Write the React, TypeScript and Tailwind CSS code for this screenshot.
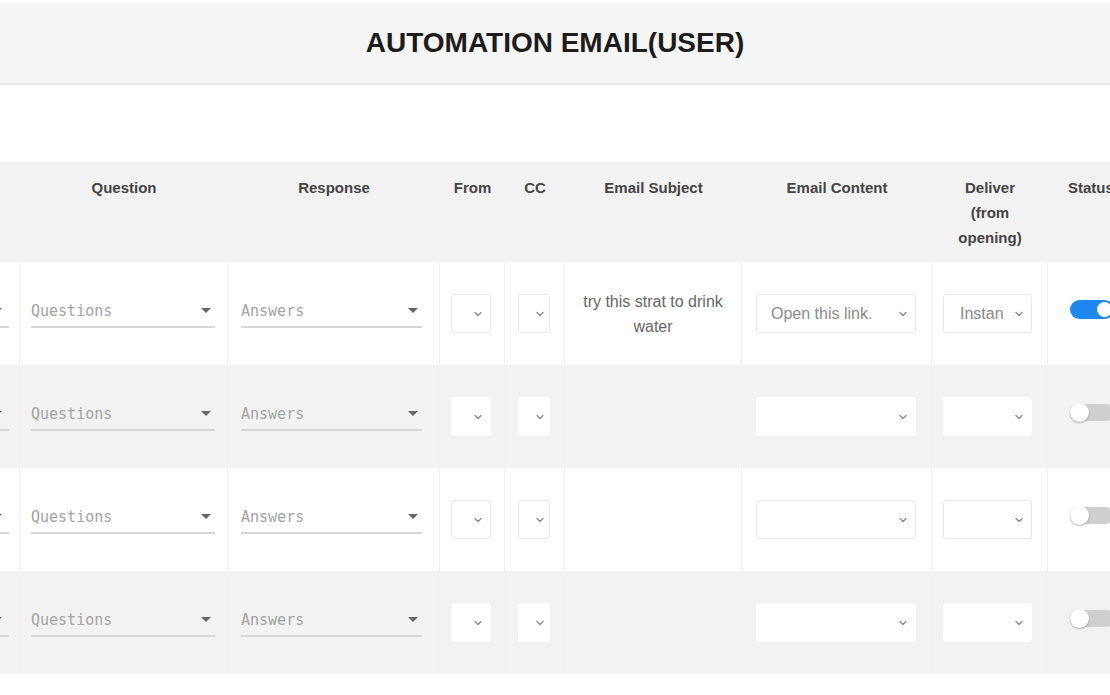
import { ChevronDown } from 'lucide-react';

type Row = {
  subject?: string;
  content?: string;
  deliver?: string;
  active: boolean;
};

const rows: Row[] = [
  { subject: 'try this strat to drink water', content: 'Open this link...', deliver: 'Instantly', active: true },
  { active: false },
  { active: false },
  { active: false },
];

const cols = 'grid grid-cols-[20px_208px_212px_65px_60px_177px_190px_116px_80px]';

function Caret() {
  return (
    <svg width="10" height="5" viewBox="0 0 10 5" className="shrink-0">
      <path d="M0 0 L10 0 L5 5 Z" fill="#666" />
    </svg>
  );
}

// underlined select used for Question / Response
function LineSelect({ placeholder, width, caretGap = 4 }: { placeholder: string; width: number; caretGap?: number }) {
  return (
    <div
      className="flex items-center justify-between h-[28px] pb-[4px] border-b-2 border-[#d6d6d6] shrink-0"
      style={{ width }}
    >
      <span className="font-['DejaVu_Sans_Mono',monospace] text-[15px] leading-[20px] text-[#a3a3a3]">
        {placeholder}
      </span>
      <span style={{ marginRight: caretGap }}>
        <Caret />
      </span>
    </div>
  );
}

function BoxSelect({
  width,
  value,
  textPad = 15,
  textWidth,
  gray,
}: {
  width: number;
  value?: string;
  textPad?: number;
  textWidth?: number;
  gray: boolean;
}) {
  return (
    <div
      className={`flex items-center h-[39px] rounded-[3px] border ${
        gray ? 'bg-white border-white' : 'bg-white border-[#e8e8e8]'
      }`}
      style={{ width }}
    >
      <div className="flex-1 overflow-hidden" style={{ paddingLeft: textPad }}>
        {value && (
          <div
            className="overflow-hidden whitespace-nowrap text-[16px] text-[#8a8a8a]"
            style={{ width: textWidth }}
          >
            {value}
          </div>
        )}
      </div>
      <ChevronDown className="w-[12px] h-[12px] text-[#888] mr-[6px] shrink-0" strokeWidth={2.5} />
    </div>
  );
}

function Toggle({ on }: { on: boolean }) {
  return on ? (
    <div className="w-[44px] h-[19px] rounded-full bg-[#1e88f0] flex items-center justify-end pr-[2px]">
      <div className="w-[15px] h-[15px] rounded-full bg-white" />
    </div>
  ) : (
    <div className="w-[44px] h-[17px] rounded-full bg-[#cfcfcf] flex items-center">
      <div className="w-[19px] h-[19px] rounded-full bg-white shadow-[0_1px_2px_rgba(0,0,0,0.3)]" />
    </div>
  );
}

export default function App() {
  return (
    <div className="w-[1110px] h-[695px] bg-white overflow-hidden font-['Liberation_Sans',Arial,sans-serif]">
      {/* Title bar */}
      <div className="pt-[3px]">
        <div className="h-[82px] bg-[#f5f5f5] border-b-2 border-[#e9e9e9] flex items-center justify-center">
          <h1 className="text-[28px] font-bold text-[#1c1c1c]">AUTOMATION EMAIL(USER)</h1>
        </div>
      </div>

      <div className="h-[77px]" />

      {/* Table header */}
      <div className={`${cols} h-[100px] bg-[#f2f2f2] text-[15px] font-bold text-[#444] leading-[25px] text-center`}>
        <div />
        <div className="pt-[13px]">Question</div>
        <div className="pt-[13px]">Response</div>
        <div className="pt-[13px]">From</div>
        <div className="pt-[13px]">CC</div>
        <div className="pt-[13px]">Email Subject</div>
        <div className="pt-[13px]">Email Content</div>
        <div className="pt-[13px] px-[22px]">Deliver (from opening)</div>
        <div className="pt-[13px] text-left pl-[20px]">Status</div>
      </div>

      {/* Rows */}
      {rows.map((row, i) => {
        const gray = i % 2 === 1;
        return (
          <div key={i} className={`${cols} h-[103px] ${gray ? 'bg-[#f2f2f2]' : 'bg-white'}`}>
            <div className="flex items-center justify-end pr-[10px] overflow-hidden border-r border-[#f0f0f0]">
              <LineSelect placeholder="" width={180} caretGap={7} />
            </div>
            <div className="flex items-center pl-[11px] border-r border-[#f0f0f0]">
              <LineSelect placeholder="Questions" width={184} />
            </div>
            <div className="flex items-center pl-[13px] border-r border-[#f0f0f0]">
              <LineSelect placeholder="Answers" width={181} />
            </div>
            <div className="flex items-center pl-[11px] border-r border-[#f0f0f0]">
              <BoxSelect width={40} gray={gray} />
            </div>
            <div className="flex items-center pl-[13px] border-r border-[#f0f0f0]">
              <BoxSelect width={32} gray={gray} />
            </div>
            <div className="flex items-center justify-center px-[12px] border-r border-[#f0f0f0] text-center text-[16px] leading-[25px] text-[#666]">
              {row.subject}
            </div>
            <div className="flex items-center pl-[14px] border-r border-[#f0f0f0]">
              <BoxSelect width={160} value={row.content} textPad={14} textWidth={100} gray={gray} />
            </div>
            <div className="flex items-center pl-[11px] border-r border-[#f0f0f0]">
              <BoxSelect width={89} value={row.deliver} textPad={16} textWidth={43} gray={gray} />
            </div>
            <div className="flex items-center pl-[22px] pb-[8px]">
              <Toggle on={row.active} />
            </div>
          </div>
        );
      })}
    </div>
  );
}
